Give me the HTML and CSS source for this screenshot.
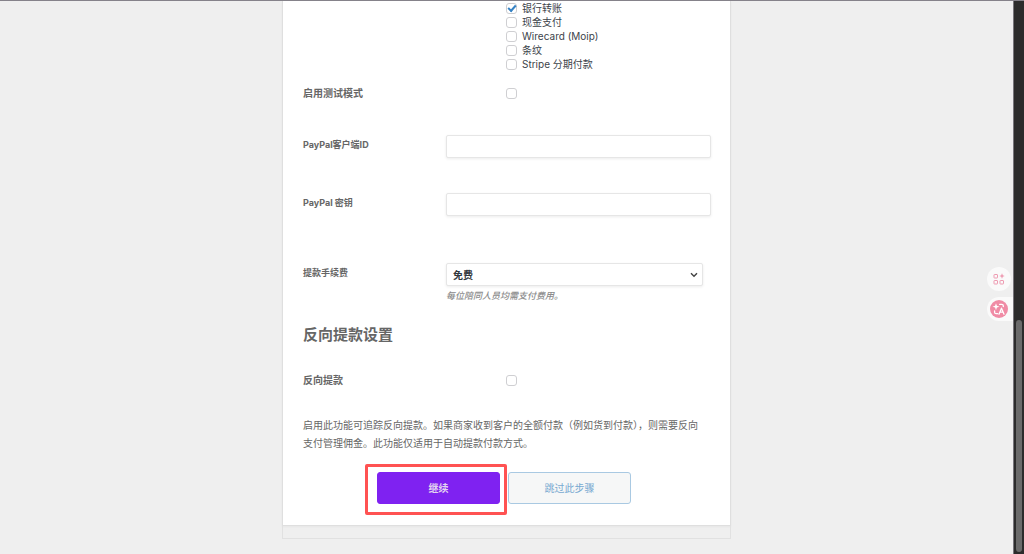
FILE: index.html
```html
<!DOCTYPE html>
<html lang="zh-CN">
<head>
<meta charset="utf-8">
<meta name="viewport" content="width=device-width, initial-scale=1">
<title>提款设置</title>
<link rel="stylesheet" href="styles.css">
</head>
<body>
<div class="app">
  <main class="page">
    <div class="wizard">
      <form class="card">
        <div class="row row-methods">
          <span class="label"></span>
          <div class="methods">
            <label class="method"><input class="check" type="checkbox" checked>银行转账</label>
            <label class="method"><input class="check" type="checkbox">现金支付</label>
            <label class="method"><input class="check" type="checkbox">Wirecard (Moip)</label>
            <label class="method"><input class="check" type="checkbox">条纹</label>
            <label class="method"><input class="check" type="checkbox">Stripe 分期付款</label>
          </div>
        </div>
        <div class="row row-check">
          <label class="label" for="test-mode">启用测试模式</label>
          <input class="check" id="test-mode" type="checkbox">
        </div>
        <div class="row row-field">
          <label class="label label-small" for="client-id">PayPal客户端ID</label>
          <input class="field" id="client-id" type="text">
        </div>
        <div class="row row-field">
          <label class="label label-small" for="secret">PayPal 密钥</label>
          <input class="field" id="secret" type="text">
        </div>
        <div class="row row-field row-fee">
          <label class="label label-small" for="fee">提款手续费</label>
          <div class="fee">
            <div class="select-wrap">
              <select class="field select" id="fee"><option>免费</option></select>
              <svg class="chevron" viewBox="0 0 8 6" aria-hidden="true"><path d="M1 1.2 4 4.3 7 1.2"/></svg>
            </div>
            <p class="hint">每位陪同人员均需支付费用。</p>
          </div>
        </div>
        <h2 class="heading">反向提款设置</h2>
        <div class="row row-check row-reverse">
          <label class="label" for="reverse">反向提款</label>
          <input class="check" id="reverse" type="checkbox">
        </div>
        <p class="description">启用此功能可追踪反向提款。如果商家收到客户的全额付款（例如货到付款），则需要反向支付管理佣金。此功能仅适用于自动提款付款方式。</p>
        <div class="actions">
          <div class="highlighted"><button class="button button-primary" type="submit">继续</button></div>
          <button class="button button-skip" type="button">跳过此步骤</button>
        </div>
      </form>
      <div class="card-foot"></div>
    </div>
  </main>
  <div class="scrollbar"><div class="thumb"></div></div>
  <div class="tools">
    <button class="tool" type="button" aria-label="工具">
      <svg viewBox="0 0 12 12" class="icon-grid" aria-hidden="true">
        <rect x="1" y="1.500" width="3.500" height="3.500" rx=".5"/>
        <rect x="1" y="7.500" width="3.500" height="3.500" rx=".5"/>
        <rect x="7" y="7.500" width="3.500" height="3.500" rx=".5"/>
        <path d="M9 .3 9.800 2.200 11.700 3 9.800 3.800 9 5.700 8.200 3.800 6.300 3 8.200 2.200z"/>
      </svg>
    </button>
    <button class="tool tool-tab" type="button" aria-label="翻译">
      <svg viewBox="0 0 18 18" class="icon-translate" aria-hidden="true">
        <circle cx="9" cy="9" r="9"/>
        <path class="spark" d="M6 3.2 6.9 5.8 9.5 6.7 6.9 7.6 6 10.2 5.1 7.6 2.5 6.7 5.1 5.8z"/>
        <path class="stroke" d="M9.6 4.300h2.200q1.500 0 1.500 1.500v.8M4.600 11v1.200q0 1.500 1.500 1.500h1.500M9 14.200l2.500-6 2.500 6M9.900 12.200h3.200"/>
      </svg>
    </button>
  </div>
</div>
</body>
</html>
```
FILE: styles.css
```css
* {
  box-sizing: border-box;
}

body {
  margin: 0;
  background: #efefef;
  color: #666;
  font: 10px/14px Inter, "Noto Sans CJK SC", sans-serif;
}

button,
input,
select {
  margin: 0;
  font: inherit;
}

p,
h2 {
  margin: 0;
}

.app {
  display: flex;
  min-height: 100vh;
  border-top: 1px solid #85828a;
}

.page {
  flex: 1;
}

.wizard {
  max-width: 449px;
  margin: 0 auto;
}

.card {
  padding: 0 19px 21px 20px;
  background: #fff;
  border: 1px solid #dfdfdf;
  border-top: 0;
  box-shadow: 0 1px 2px rgba(0, 0, 0, 0.04);
}

.card-foot {
  height: 13px;
  border: 1px solid #e1e1e1;
  border-top: 0;
}

.row {
  display: grid;
  grid-template-columns: 203px 1fr;
}

.row-check {
  align-items: center;
  margin-top: 15px;
}

.label {
  font-weight: 700;
}

.label-small {
  font-size: 9px;
  padding-top: 3px;
}

.method {
  display: flex;
  align-items: center;
  gap: 5px;
  height: 14px;
  color: #3c434a;
}

.check {
  display: grid;
  place-items: center;
  appearance: none;
  width: 11px;
  height: 11px;
  background: #fff;
  border: 1px solid #cfcfd2;
  border-radius: 3px;
}

.check:checked::before {
  content: "";
  width: 6px;
  height: 3px;
  border: solid #3582c4;
  border-width: 0 0 2px 2px;
  transform: rotate(-48deg);
  margin-bottom: 2px;
}

.row-field {
  grid-template-columns: 143px 1fr;
  margin-top: 35px;
}

.field {
  width: 100%;
  height: 23px;
  padding: 0 6px;
  background: #fff;
  border: 1px solid #e6e6e6;
  border-radius: 2px;
  box-shadow: 0 1px 3px rgba(0, 0, 0, 0.08);
}

.row-fee {
  margin-top: 47px;
}

.select-wrap {
  position: relative;
  margin-right: 8px;
}

.select {
  display: block;
  appearance: none;
  color: #32373c;
  font-weight: 700;
}

.chevron {
  position: absolute;
  top: 9px;
  right: 5px;
  width: 8px;
  height: 6px;
  fill: none;
  stroke: #444;
  stroke-width: 1.4;
}

.hint {
  margin-top: 3px;
  color: #8c8c8c;
  font-size: 9px;
  font-style: italic;
  font-weight: 500;
}

.heading {
  margin-top: 22px;
  font-size: 15px;
  font-weight: 700;
  line-height: 20px;
}

.row-reverse {
  margin-top: 28px;
}

.description {
  margin-top: 29px;
  padding-right: 5px;
  line-height: 18px;
}

.actions {
  display: flex;
  justify-content: center;
  gap: 8px;
  margin-top: 20px;
  padding-right: 6px;
}

.highlighted {
  position: relative;
}

.highlighted::after {
  content: "";
  position: absolute;
  inset: -8px -7px -11px -12px;
  border: 3px solid #ff5252;
  border-radius: 2px;
  pointer-events: none;
}

.button {
  width: 123px;
  height: 32px;
  padding: 0;
  border: 1px solid;
  border-radius: 3px;
}

.button-primary {
  background: #7f22f1;
  border-color: #7f22f1;
  color: #e2d4ef;
  font-weight: 700;
}

.button-skip {
  background: #f6f7f7;
  border-color: #a9c9e2;
  color: #78a9d1;
}

.scrollbar {
  display: flex;
  align-items: flex-end;
  width: 11px;
  padding: 2px;
  background: #2c2c2c;
  border-left: 1px solid #77757b;
}

.thumb {
  width: 6px;
  height: 232px;
  background: #6b6b6b;
  border-radius: 3px;
}

.tools {
  position: fixed;
  top: 267px;
  right: 11px;
  display: flex;
  flex-direction: column;
  gap: 6px;
}

.tool {
  display: flex;
  align-items: center;
  width: 24px;
  height: 24px;
  margin-right: 2px;
  padding: 0 6px;
  background: #fafafa;
  border: 0;
  border-radius: 12px;
}

.tool-tab {
  width: 26px;
  margin-right: 0;
  padding: 0 3px;
  border-radius: 12px 0 0 12px;
}

.icon-grid {
  flex: none;
  width: 12px;
  height: 12px;
  fill: none;
  stroke: #ee9bb2;
}

.icon-grid path {
  fill: #ee9bb2;
  stroke: none;
}

.icon-translate {
  flex: none;
  width: 18px;
  height: 18px;
  fill: #f08ba5;
}

.icon-translate .spark {
  fill: #fff;
}

.icon-translate .stroke {
  fill: none;
  stroke: #fff;
  stroke-width: 1.3;
  stroke-linecap: round;
  stroke-linejoin: round;
}
```
